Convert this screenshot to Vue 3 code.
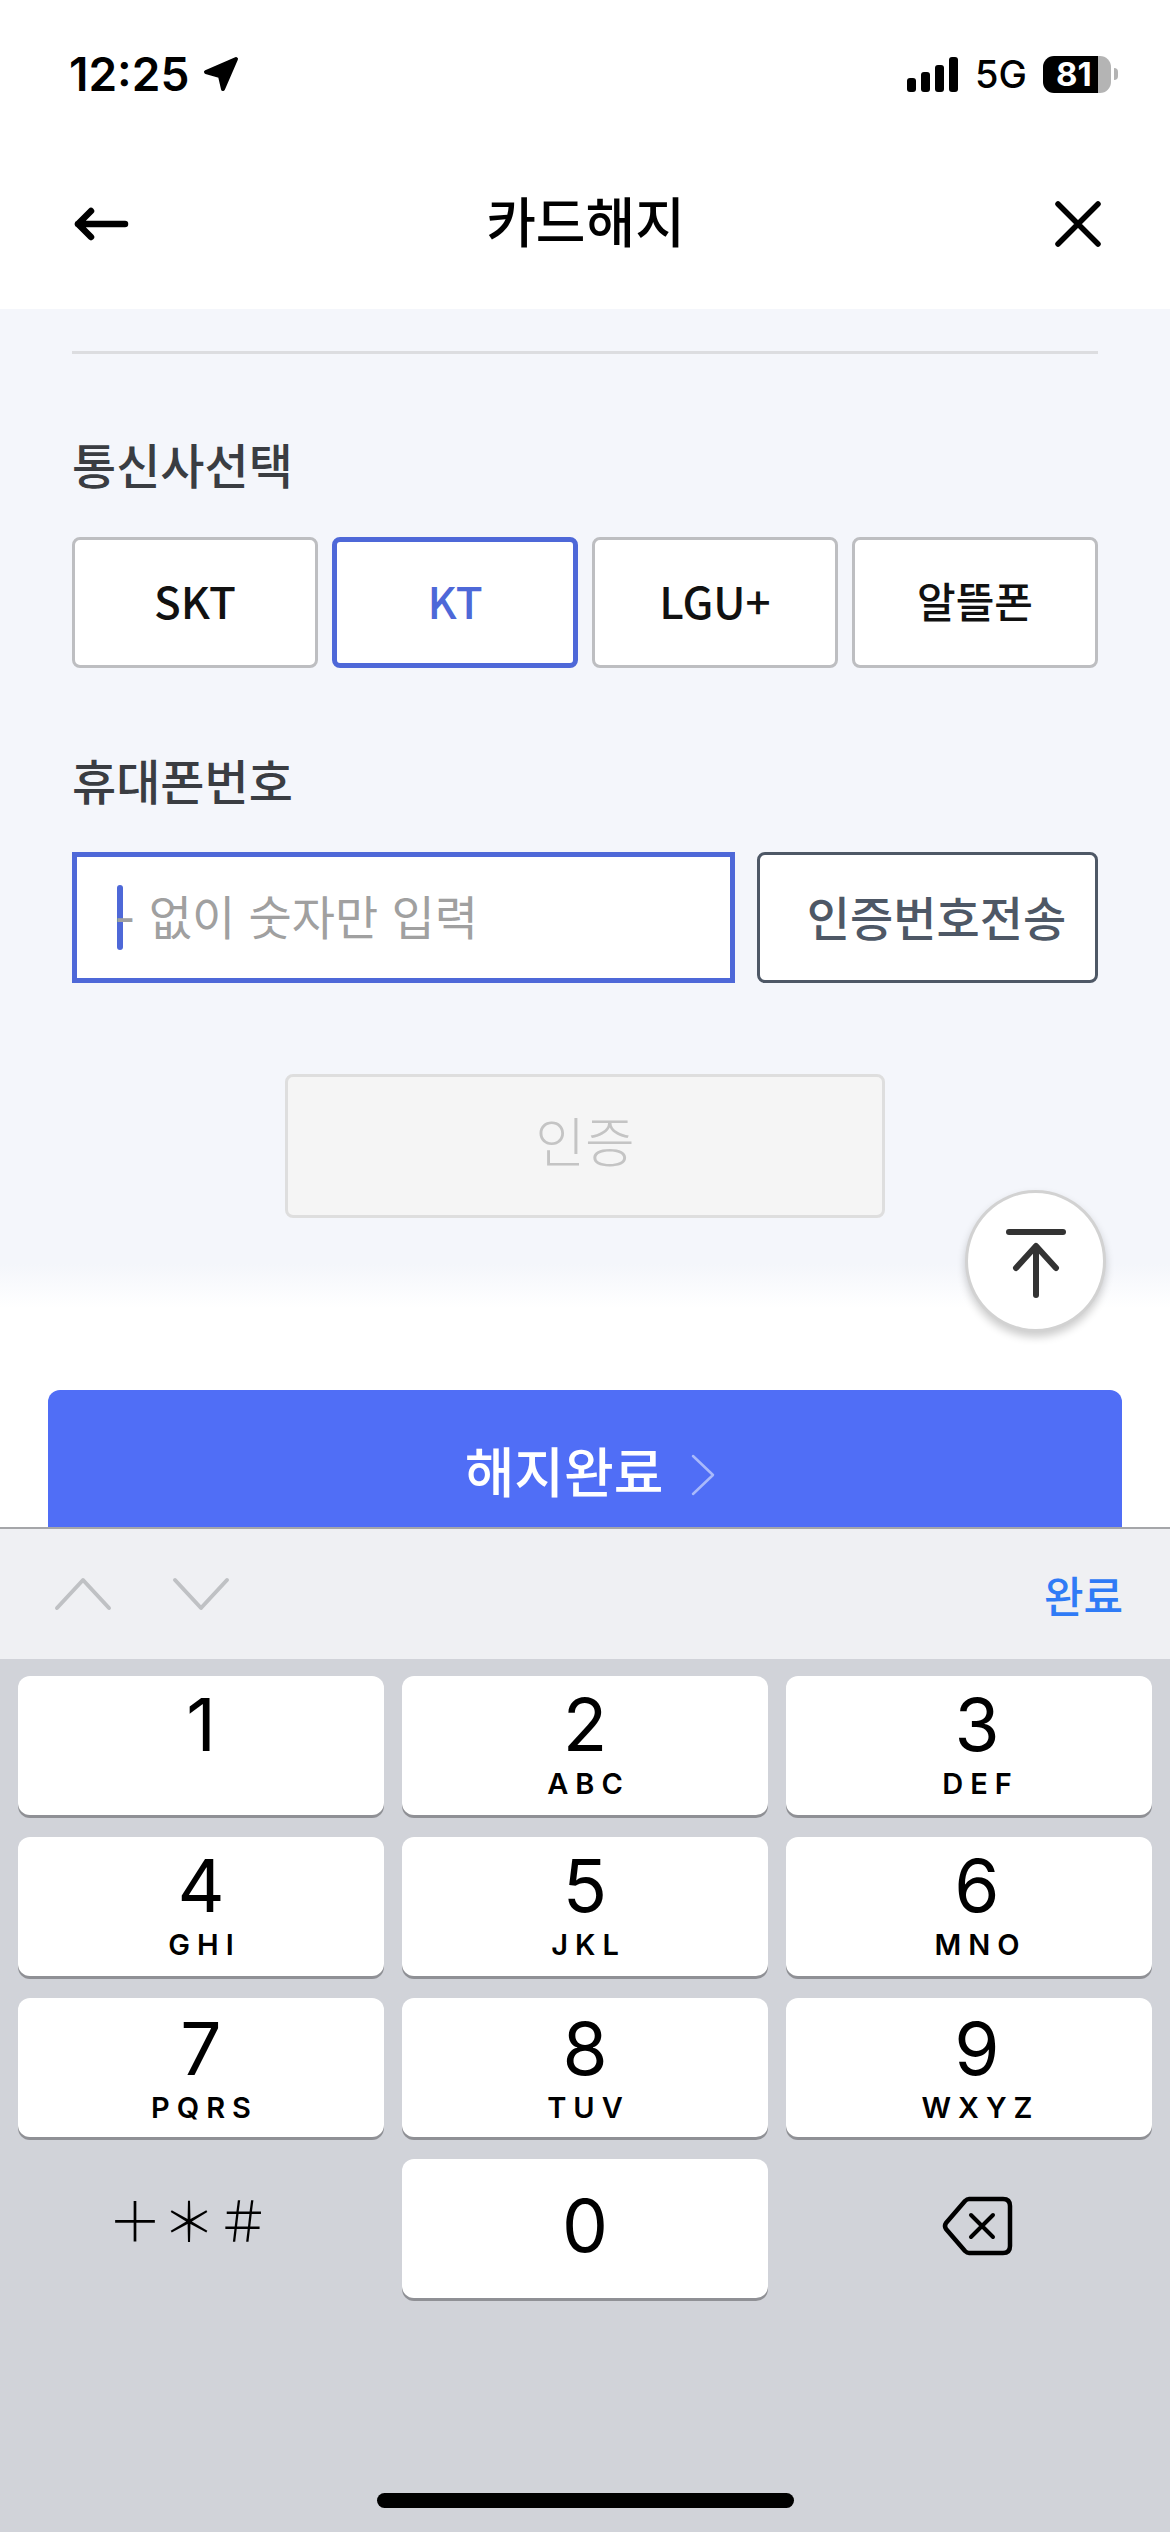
<template>
  <div class="page">
    <header class="status">
      <div class="time">
        <span>12:25</span>
        <svg class="loc" width="36" height="36" viewBox="0 0 36 36"><path d="M33 3L3 16l14 4 3 13z" fill="#000" stroke="#000" stroke-width="4" stroke-linejoin="round" /></svg>
      </div>
      <div class="indicators">
        <div class="signal">
          <i v-for="h in [14, 20, 27, 35]" :key="h" :style="{ height: h + 'px' }"></i>
        </div>
        <span class="net">5G</span>
        <div class="battery"><span>81</span></div>
        <i class="tip"></i>
      </div>
    </header>

    <nav class="nav">
      <svg width="56" height="34" viewBox="0 0 56 34" fill="none" stroke="#000" stroke-width="6.5" stroke-linecap="round" stroke-linejoin="round">
        <path d="M52 17H5M18 4L5 17l13 13" />
      </svg>
      <h1>카드해지</h1>
      <svg class="close" width="46" height="46" viewBox="0 0 46 46" fill="none" stroke="#000" stroke-width="5.5" stroke-linecap="round">
        <path d="M3 3l40 40M43 3L3 43" />
      </svg>
    </nav>

    <main class="content">
      <div class="rule"></div>

      <h2 class="label first">통신사선택</h2>
      <div class="carriers">
        <button v-for="c in carriers" :key="c" class="carrier" :class="{ on: c === 'KT', ko: c === '알뜰폰' }">{{ c }}</button>
      </div>

      <h2 class="label second">휴대폰번호</h2>
      <div class="phone">
        <div class="input">
          <i class="caret"></i>
          <span>- 없이 숫자만 입력</span>
        </div>
        <button class="send">인증번호전송</button>
      </div>

      <button class="verify">인증</button>
    </main>

    <section class="bottom">
      <button class="done">
        <span>해지완료</span>
        <svg class="chev" width="24" height="42" viewBox="0 0 24 42" fill="none" stroke="#a9b9fb" stroke-width="2.5" stroke-linecap="round" stroke-linejoin="round">
          <path d="M2 2l20 19L2 40" />
        </svg>
      </button>
    </section>

    <button class="to-top">
      <svg width="60" height="70" viewBox="0 0 60 70" fill="none" stroke="#333" stroke-width="6" stroke-linecap="round" stroke-linejoin="round">
        <path d="M3 3h54" />
        <path d="M30 66V18" />
        <path d="M10 39l20-22 20 22" />
      </svg>
    </button>

    <footer class="keyboard">
      <div class="toolbar">
        <div class="arrows">
          <svg width="58" height="34" viewBox="0 0 58 34" fill="none" stroke="#bfc1c4" stroke-width="4" stroke-linecap="round" stroke-linejoin="round"><path d="M3 31L29 3l26 28" /></svg>
          <svg width="58" height="34" viewBox="0 0 58 34" fill="none" stroke="#bfc1c4" stroke-width="4" stroke-linecap="round" stroke-linejoin="round"><path d="M3 3l26 28L55 3" /></svg>
        </div>
        <span class="finish">완료</span>
      </div>
      <div class="keys">
        <div v-for="k in keys" :key="k.n" class="key">
          <span class="digit">{{ k.n }}</span>
          <span v-if="k.l" class="letters">{{ k.l }}</span>
        </div>
        <div class="key plain symbols">＋＊＃</div>
        <div class="key zero"><span class="digit">0</span></div>
        <div class="key plain backspace">
          <svg width="72" height="60" viewBox="0 0 72 60" fill="none" stroke="#000" stroke-width="4.5" stroke-linejoin="round" stroke-linecap="round">
            <path d="M28 3h34q7 0 7 7v40q0 7-7 7H28q-2 0-4-2L5 33q-2-3 0-6L24 5q2-2 4-2z" />
            <path d="M30 19l22 22M52 19L30 41" stroke-width="4" />
          </svg>
        </div>
      </div>
      <div class="home"></div>
    </footer>
  </div>
</template>

<script setup>
const carriers = ['SKT', 'KT', 'LGU+', '알뜰폰']

const keys = [
  { n: '1', l: '' },
  { n: '2', l: 'ABC' },
  { n: '3', l: 'DEF' },
  { n: '4', l: 'GHI' },
  { n: '5', l: 'JKL' },
  { n: '6', l: 'MNO' },
  { n: '7', l: 'PQRS' },
  { n: '8', l: 'TUV' },
  { n: '9', l: 'WXYZ' },
]
</script>

<style scoped>
.page {
  position: relative;
  width: 1170px;
  height: 2532px;
  overflow: hidden;
  display: flex;
  flex-direction: column;
  background: #fff;
  font-family: Inter, "Noto Sans CJK KR", sans-serif;
  color: #000;
}
button {
  font-family: inherit;
  padding: 0;
  margin: 0;
}

.status {
  height: 100px;
  flex: none;
  box-sizing: border-box;
  padding: 49px 52px 0 69px;
  display: flex;
  justify-content: space-between;
  align-items: flex-start;
}
.time {
  display: flex;
  align-items: center;
  gap: 14px;
  font-size: 46px;
  line-height: 50px;
  font-weight: 600;
}
.indicators {
  display: flex;
  align-items: center;
  height: 50px;
}
.signal {
  display: flex;
  align-items: flex-end;
  gap: 5px;
  margin-right: 17px;
}
.signal i {
  display: block;
  width: 9px;
  background: #000;
  border-radius: 3px;
}
.net {
  font-size: 38px;
  font-weight: 500;
  margin-right: 16px;
}
.battery {
  width: 68px;
  height: 37px;
  border-radius: 11px;
  background: linear-gradient(90deg, #000 81%, #b4b4b4 81%);
  color: #fff;
  font-size: 33px;
  font-weight: 700;
  line-height: 37px;
  box-sizing: border-box;
  padding-left: 13px;
}
.tip {
  display: block;
  width: 4px;
  height: 12px;
  margin-left: 3px;
  background: #b4b4b4;
  border-radius: 0 4px 4px 0;
}

.nav {
  height: 209px;
  flex: none;
  box-sizing: border-box;
  padding: 38px 72px 0 73px;
  display: grid;
  grid-template-columns: 1fr auto 1fr;
  align-items: center;
}
.nav h1 {
  margin: 0;
  font-size: 54px;
  font-weight: 500;
  line-height: 70px;
}
.close {
  justify-self: end;
  margin-right: -3px;
}

.content {
  height: 999px;
  flex: none;
  box-sizing: border-box;
  padding: 42px 72px 0;
  display: flex;
  flex-direction: column;
  background: linear-gradient(180deg, #f4f6fb 0, #f4f6fb 955px, #fff 999px);
}
.rule {
  height: 3px;
  background: #dcdde0;
}
.label {
  margin: 0;
  font-size: 48px;
  font-weight: 500;
  line-height: 60px;
  color: #3a3d42;
}
.label.first {
  margin-top: 83px;
}
.label.second {
  margin-top: 85px;
}
.carriers {
  margin-top: 40px;
  display: grid;
  grid-template-columns: repeat(4, 1fr);
  gap: 14px;
}
.carrier {
  height: 131px;
  box-sizing: border-box;
  background: #fff;
  border: 3px solid #bdbec1;
  border-radius: 8px;
  font-family: "Noto Sans CJK KR", sans-serif;
  font-size: 44px;
  font-weight: 500;
  color: #111;
  padding-bottom: 6px;
}
.carrier.ko {
  font-size: 42px;
}
.carrier.on {
  border: 5px solid #4e68d8;
  color: #4e68d8;
}
.phone {
  margin-top: 39px;
  display: flex;
  gap: 22px;
}
.input {
  width: 663px;
  height: 131px;
  box-sizing: border-box;
  border: 5px solid #4e68d8;
  background: #fff;
  display: flex;
  align-items: center;
  padding-left: 40px;
  font-size: 47px;
  color: #a0a0a0;
}
.caret {
  display: block;
  width: 6px;
  height: 65px;
  background: #4e68d8;
  border-radius: 3px;
  flex: none;
}
.input span {
  margin: -6px 0 0 -9px;
}
.send {
  flex: 1;
  height: 131px;
  box-sizing: border-box;
  background: #fff;
  border: 3px solid #4e5866;
  border-radius: 8px;
  font-size: 47px;
  font-weight: 500;
  color: #4e5866;
  padding: 0 0 5px 18px;
  white-space: nowrap;
}
.verify {
  margin: 91px auto 0;
  width: 600px;
  height: 144px;
  box-sizing: border-box;
  background: #f5f5f5;
  border: 3px solid #dedede;
  border-radius: 8px;
  font-size: 54px;
  font-weight: 300;
  color: #c4c4c4;
  padding-bottom: 14px;
}

.bottom {
  flex: 1;
  padding: 82px 48px 0;
  overflow: hidden;
  background: #fff;
}
.done {
  width: 100%;
  height: 160px;
  background: #506ef6;
  border: none;
  border-radius: 12px;
  color: #fff;
  font-size: 54px;
  font-weight: 500;
  display: flex;
  justify-content: center;
  align-items: center;
  gap: 28px;
  padding: 0 0 2px 10px;
}
.chev {
  margin-top: 12px;
}

.to-top {
  position: absolute;
  left: 965px;
  top: 1190px;
  width: 141px;
  height: 142px;
  box-sizing: border-box;
  border-radius: 50%;
  border: 3px solid #d2d2d2;
  background: #fff;
  box-shadow: 0 5px 8px rgba(0, 0, 0, 0.2);
  display: flex;
  align-items: center;
  justify-content: center;
  padding-top: 5px;
}

.keyboard {
  height: 1005px;
  flex: none;
  background: #d1d3d9;
  display: flex;
  flex-direction: column;
}
.toolbar {
  height: 132px;
  flex: none;
  box-sizing: border-box;
  border-top: 2px solid #a5a6a9;
  background: #eff0f3;
  padding: 0 47px 0 54px;
  display: flex;
  align-items: center;
  justify-content: space-between;
}
.arrows {
  display: flex;
  gap: 60px;
}
.finish {
  font-size: 43px;
  font-weight: 500;
  color: #2f7bf6;
}
.keys {
  padding: 17px 18px 0;
  display: grid;
  grid-template-columns: repeat(3, 1fr);
  grid-auto-rows: 139px;
  gap: 22px 18px;
}
.key {
  border-radius: 12px;
  background: #fff;
  box-shadow: 0 3px 0 #8f9095;
  display: flex;
  flex-direction: column;
  align-items: center;
  padding-top: 9px;
  box-sizing: border-box;
}
.key:nth-child(3n) {
  padding-left: 16px;
}
.key:nth-child(n+7):nth-child(-n+9) {
  padding-top: 11px;
}
.digit {
  font-size: 73px;
  line-height: 80px;
  font-weight: 400;
}
.letters {
  font-size: 29px;
  line-height: 30px;
  font-weight: 600;
  letter-spacing: 7px;
  margin-top: 4px;
  margin-right: -7px;
}
.key.zero {
  justify-content: center;
  padding: 0 0 6px;
}
.key.plain {
  background: none;
  box-shadow: none;
  justify-content: center;
  padding-top: 0;
}
.key.backspace {
  padding-bottom: 6px;
}
.key.symbols {
  font-family: "Noto Sans CJK KR", sans-serif;
  font-size: 54px;
  font-weight: 300;
  padding: 0 24px 20px 0;
}
.home {
  margin: auto auto 24px;
  width: 417px;
  height: 15px;
  border-radius: 8px;
  background: #000;
}
</style>
